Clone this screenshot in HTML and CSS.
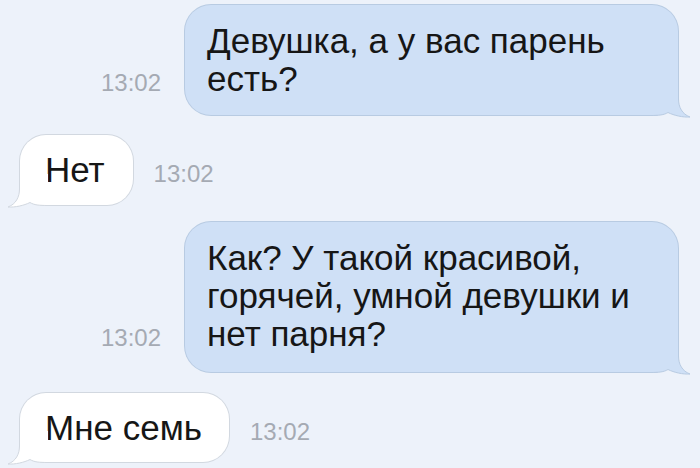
FILE: index.html
```html
<!DOCTYPE html>
<html lang="ru">
<head>
    <meta charset="UTF-8">
    <meta name="viewport" content="width=device-width, initial-scale=1.0">
    <title>Сообщения</title>
    <link rel="stylesheet" href="styles.css">
</head>
<body>
    <div class="chat">
        <div class="row out first">
            <span class="time">13:02</span>
            <div class="bubble">
                Девушка, а у вас парень есть?
                <svg class="tail" width="42" height="34" viewBox="0 0 42 34">
                    <path class="tail-fill" d="M0 0 L28.5 0 L28.5 15 C28.5 23 32 30 40 33 C33 33.5 24 31.5 18 28.5 C14 31 9 31.5 0 31.5 Z"/>
                    <path class="tail-line" d="M28.5 0 L28.5 15 C28.5 23 32 30 40 33 C33 33.5 24 31.5 18 28.5 C14 31 9 31.5 0 31.5"/>
                </svg>
            </div>
        </div>

        <div class="row in second">
            <div class="bubble">
                Нет
                <svg class="tail" width="42" height="34" viewBox="0 0 42 34">
                    <path class="tail-fill" d="M0 0 L28.5 0 L28.5 15 C28.5 23 32 30 40 33 C33 33.5 24 31.5 18 28.5 C14 31 9 31.5 0 31.5 Z"/>
                    <path class="tail-line" d="M28.5 0 L28.5 15 C28.5 23 32 30 40 33 C33 33.5 24 31.5 18 28.5 C14 31 9 31.5 0 31.5"/>
                </svg>
            </div>
            <span class="time">13:02</span>
        </div>

        <div class="row out third">
            <span class="time">13:02</span>
            <div class="bubble">
                Как? У такой красивой, горячей, умной девушки и нет парня?
                <svg class="tail" width="42" height="34" viewBox="0 0 42 34">
                    <path class="tail-fill" d="M0 0 L28.5 0 L28.5 15 C28.5 23 32 30 40 33 C33 33.5 24 31.5 18 28.5 C14 31 9 31.5 0 31.5 Z"/>
                    <path class="tail-line" d="M28.5 0 L28.5 15 C28.5 23 32 30 40 33 C33 33.5 24 31.5 18 28.5 C14 31 9 31.5 0 31.5"/>
                </svg>
            </div>
        </div>

        <div class="row in fourth">
            <div class="bubble">
                Мне семь
                <svg class="tail" width="42" height="34" viewBox="0 0 42 34">
                    <path class="tail-fill" d="M0 0 L28.5 0 L28.5 15 C28.5 23 32 30 40 33 C33 33.5 24 31.5 18 28.5 C14 31 9 31.5 0 31.5 Z"/>
                    <path class="tail-line" d="M28.5 0 L28.5 15 C28.5 23 32 30 40 33 C33 33.5 24 31.5 18 28.5 C14 31 9 31.5 0 31.5"/>
                </svg>
            </div>
            <span class="time">13:02</span>
        </div>
    </div>
</body>
</html>
```

FILE: styles.css
```css
body {
    margin: 0;
    padding: 0;
    background-color: #edf2fa;
    font-family: 'Liberation Sans', Arial, sans-serif;
    color: #161616;
}
.chat {
    display: flex;
    flex-direction: column;
    height: 468px;
    overflow: hidden;
}
.row {
    display: flex;
    align-items: last baseline;
}
.row.out {
    justify-content: flex-end;
    padding-right: 22px;
    gap: 24px;
}
.row.in {
    justify-content: flex-start;
    padding-left: 20px;
    gap: 21px;
}
.first { margin-top: 5px; }
.second { margin-top: 20px; }
.third { margin-top: 17px; }
.fourth { margin-top: 21px; }

.bubble {
    position: relative;
    font-size: 35px;
    line-height: 38px;
    border-radius: 26px;
}
.out .bubble {
    box-sizing: border-box;
    width: 493px;
    padding: 17px 16px 17px 22px;
    background-color: #cfe0f6;
    box-shadow: 0 0 0 1px #b8cbe2;
}
.in .bubble {
    padding: 16px 28px 16px 25px;
    background-color: #ffffff;
    box-shadow: 0 0 0 1px #d2d8e0;
}
.fourth .bubble {
    padding: 16px 27px 15px 25px;
}
.third .bubble {
    padding-top: 17px;
    padding-bottom: 19px;
}

/* хвостик пузыря */
.tail {
    position: absolute;
    bottom: -3px;
    right: -14px;
    display: block;
}
.in .tail {
    right: auto;
    left: -14px;
    transform: scaleX(-1);
}
.tail-line {
    fill: none;
    stroke-width: 1;
}
.out .tail-fill { fill: #cfe0f6; }
.out .tail-line { stroke: #b8cbe2; }
.in .tail-fill { fill: #ffffff; }
.in .tail-line { stroke: #d2d8e0; }

.time {
    font-size: 24px;
    color: #a5aab3;
    white-space: nowrap;
}
```
